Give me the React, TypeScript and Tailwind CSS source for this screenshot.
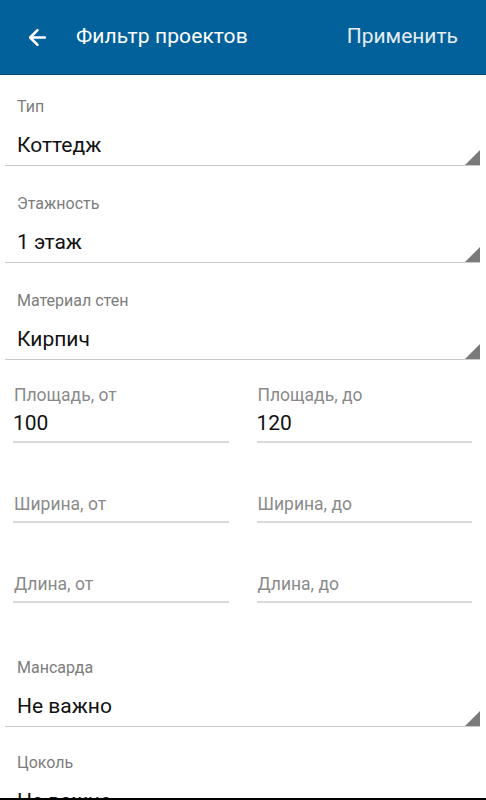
import { ArrowLeft } from "lucide-react";

const font = { fontFamily: "Roboto, 'Noto Sans', sans-serif" };

function SelectField({ label, value, className = "" }: { label: string; value: string; className?: string }) {
  return (
    <div className={className}>
      <div className="pl-[17px] text-[16px] leading-[20px] text-[#7c7c7c]">{label}</div>
      <div className="relative mt-[14px] ml-[5px] mr-[6px] border-b-[1.5px] border-[#c9c9c9]">
        <div className="pl-[12px] pb-[6px] text-[21px] leading-[28px] text-[#111]">{value}</div>
        <svg className="absolute right-0 bottom-0" width="15" height="15" viewBox="0 0 15 15">
          <polygon points="15,0 15,15 0,15" fill="#7a7a7a" />
        </svg>
      </div>
    </div>
  );
}

function NumberField({ label, value }: { label: string; value?: string }) {
  return (
    <div className="flex flex-col">
      <div className="h-[20px] pl-[1px] text-[17.5px] leading-[20px] text-[#8a8a8a]">{value ? label : ""}</div>
      <div className="mt-[4px] border-b-2 border-[#dadada] pb-[4px]">
        {value ? (
          <div className="text-[21px] leading-[28px] text-[#111]">{value}</div>
        ) : (
          <div className="pl-[1px] pt-[2px] text-[17.5px] leading-[26px] text-[#8a8a8a]">{label}</div>
        )}
      </div>
    </div>
  );
}

export default function App() {
  return (
    <div className="flex h-[800px] w-[486px] flex-col overflow-hidden bg-white" style={font}>
      <header className="flex h-[75px] shrink-0 items-center border-b border-[#024d7a] bg-[#02619b] text-white">
        <ArrowLeft className="ml-[25px]" size={25} strokeWidth={2.4} />
        <div className="ml-[26px] text-[21px] tracking-[0.1px]">Фильтр проектов</div>
        <div className="ml-auto mr-[28px] text-[21px] text-[#e4edf4]">Применить</div>
      </header>

      <main className="flex-1 overflow-hidden">
        <SelectField className="pt-[22px]" label="Тип" value="Коттедж" />
        <SelectField className="pt-[28px]" label="Этажность" value="1 этаж" />
        <SelectField className="pt-[28px]" label="Материал стен" value="Кирпич" />

        <div className="grid grid-cols-2 gap-x-[28px] gap-y-[22px] pl-[13px] pr-[14px] pt-[25px]">
          <NumberField label="Площадь, от" value="100" />
          <NumberField label="Площадь, до" value="120" />
          <NumberField label="Ширина, от" />
          <NumberField label="Ширина, до" />
          <NumberField label="Длина, от" />
          <NumberField label="Длина, до" />
        </div>

        <SelectField className="pt-[55px]" label="Мансарда" value="Не важно" />
        <SelectField className="pt-[26px]" label="Цоколь" value="Не важно" />
      </main>
      <div className="h-[2px] shrink-0 bg-black" />
    </div>
  );
}
